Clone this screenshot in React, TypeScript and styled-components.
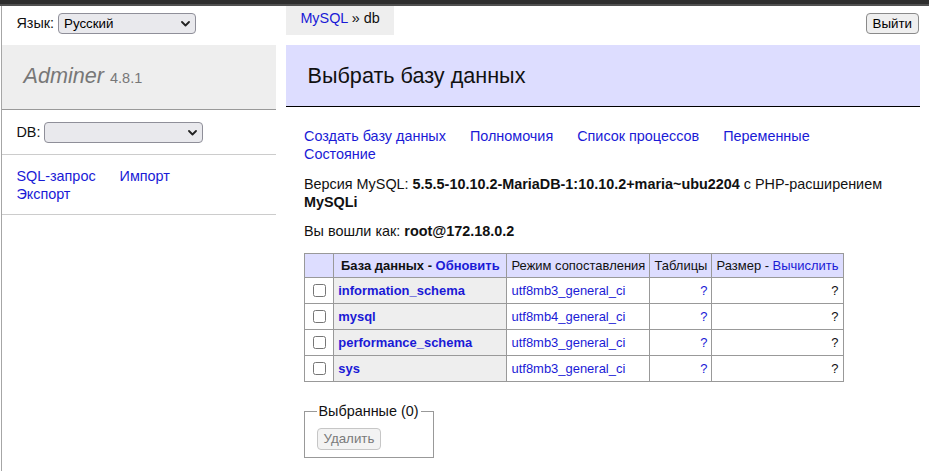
import React from "react";
import styled, { createGlobalStyle } from "styled-components";

const Global = createGlobalStyle`
  html, body { margin: 0; padding: 0; background: #fff; }
  body {
    font: 14.4px/1.25 "Liberation Sans", Arial, sans-serif;
    color: #111;
  }
  #root { width: 929px; overflow: hidden; }
`;

const TopBar = styled.div`
  height: 6px;
  background: linear-gradient(#2e2e2e 0 4px, #505050 4px 6px);
`;

const Frame = styled.div`
  margin-left: 1px;
  border-left: 1px solid #a6a6a6;
  width: 918px;
  min-height: 465px;
  display: grid;
  grid-template-columns: 273.6px 1fr;
  column-gap: 10.4px;
  align-items: start;
`;

const Sidebar = styled.aside`
  display: flex;
  flex-direction: column;
`;

const LangBar = styled.div`
  height: 25.92px;
  padding: 4.32px 14.4px 8.56px;
  display: flex;
  align-items: center;
  gap: 4px;
`;

const SelectWrap = styled.span<{ $w: number }>`
  position: relative;
  display: inline-block;
  width: ${(p) => p.$w}px;
  height: 21px;
`;

const NativeSelect = styled.select`
  appearance: none;
  -webkit-appearance: none;
  width: 100%;
  height: 100%;
  box-sizing: border-box;
  border: 1px solid #8f8f99;
  border-radius: 4px;
  background: #e9e9ed;
  color: #000;
  font: 13.33px "Liberation Sans", Arial, sans-serif;
  padding: 0 22px 0 5px;
  margin: 0;
`;

const Chevron = styled.svg`
  position: absolute;
  right: 6px;
  top: 8px;
  pointer-events: none;
`;

const Logo = styled.h1`
  margin: 0;
  font-size: 21.6px;
  line-height: 27px;
  padding: 17.28px 21.6px;
  font-weight: normal;
  background: #eee;
  border-bottom: 1px solid #999;
  color: #777;
`;

const LogoLink = styled.a`
  color: #777;
  font-style: italic;
  text-decoration: none;
`;

const Version = styled.span`
  font-size: 14.47px;
  color: #777;
`;

const DbForm = styled.form`
  margin: 0;
  padding: 11.52px 14.4px;
  border-bottom: 1px solid #ccc;
  display: flex;
  align-items: center;
  gap: 4px;
`;

const SideLinks = styled.p`
  margin: 0;
  padding: 11.52px 14.4px;
  border-bottom: 1px solid #ccc;
  line-height: 18px;
`;

const Link = styled.a<{ $bold?: boolean }>`
  color: #1a1ad6;
  text-decoration: none;
  font-weight: ${(p) => (p.$bold ? "bold" : "normal")};
`;

const NavLink = styled(Link)`
  white-space: nowrap;
  margin-right: 20px;
`;

const Main = styled.main`
  display: block;
  min-width: 0;
`;

const TopRow = styled.div`
  height: 38.8px;
  display: flex;
  justify-content: space-between;
  align-items: flex-start;
`;

const Breadcrumb = styled.div`
  height: 28.8px;
  line-height: 25.92px;
  padding: 0 14.4px;
  background: #eee;
  white-space: nowrap;
`;

const LogoutButton = styled.button`
  margin: 7.2px 1px 0 0;
  height: 21px;
  padding: 1px 6px;
  font: 13.33px "Liberation Sans", Arial, sans-serif;
  color: #000;
  background: #efefef;
  border: 1px solid #8a8a8a;
  border-radius: 4px;
`;

const Title = styled.h2`
  margin: 0 0 20px;
  font-size: 21.6px;
  line-height: 27px;
  padding: 17.28px 21.6px;
  font-weight: normal;
  color: #111;
  background: #ddf;
  border-bottom: 1px solid #000;
`;

const Content = styled.div`
  padding-left: 18px;
`;

const Para = styled.p`
  margin: 11.52px 20px 0 0;
  line-height: 18px;
`;

const DbTable = styled.table`
  margin: 12.96px 20px 0 0;
  border-collapse: collapse;
  font-size: 12.96px;
  line-height: 16.2px;
`;

const HeadRow = styled.tr`
  height: 24px;
`;

const BodyRow = styled.tr`
  height: 26px;
`;

const HeadTh = styled.th`
  background: #ddf;
  border: 1px solid #999;
  padding: 2.6px 6.8px;
  text-align: center;
  font-weight: bold;
`;

const HeadTd = styled.td`
  background: #ddf;
  border: 1px solid #999;
  padding: 2.6px 4.1px;
  text-align: left;
`;

const Cell = styled.td<{ $right?: boolean }>`
  border: 1px solid #999;
  padding: 2.6px 4.1px;
  text-align: ${(p) => (p.$right ? "right" : "left")};
`;

const NameTh = styled.th`
  border: 1px solid #999;
  padding: 2.6px 4.1px;
  background: #eee;
  text-align: left;
`;

const Check = styled.input`
  margin: 3px 3px 3px 4px;
  vertical-align: middle;
`;

const Footer = styled.div`
  border-top: 20px solid #fff;
  padding-bottom: 7.2px;
`;

const Fieldset = styled.fieldset`
  display: inline-block;
  vertical-align: top;
  margin: 0 7.2px 0 0;
  padding: 7.2px 12.5px 7.2px 11.52px;
  border: 1px solid #999;
`;

const Legend = styled.legend`
  padding: 0 2px;
  line-height: 18px;
`;

const DelButton = styled.button`
  height: 22px;
  padding: 1px 6px;
  font: 13.33px "Liberation Sans", Arial, sans-serif;
  color: #7a7a7a;
  background: #f3f3f3;
  border: 1px solid #c6c6c6;
  border-radius: 4px;
`;

const ChevronIcon = () => (
  <Chevron width="9" height="6" viewBox="0 0 9 6">
    <polyline points="1,1 4.5,4.5 8,1" fill="none" stroke="#222" strokeWidth="1.8" strokeLinecap="round" strokeLinejoin="round" />
  </Chevron>
);

const dbs = [
  { name: "information_schema", coll: "utf8mb3_general_ci" },
  { name: "mysql", coll: "utf8mb4_general_ci" },
  { name: "performance_schema", coll: "utf8mb3_general_ci" },
  { name: "sys", coll: "utf8mb3_general_ci" },
];

export default function App() {
  return (
    <>
      <Global />
      <TopBar />
      <Frame>
        <Sidebar>
          <LangBar>
            <span>Язык:</span>
            <SelectWrap $w={138}>
              <NativeSelect defaultValue="ru">
                <option value="ru">Русский</option>
                <option value="en">English</option>
              </NativeSelect>
              <ChevronIcon />
            </SelectWrap>
          </LangBar>
          <Logo>
            <LogoLink href="#">Adminer</LogoLink> <Version>4.8.1</Version>
          </Logo>
          <DbForm>
            <span>DB:</span>
            <SelectWrap $w={159}>
              <NativeSelect defaultValue="">
                <option value=""></option>
                <option>information_schema</option>
                <option>mysql</option>
                <option>performance_schema</option>
                <option>sys</option>
              </NativeSelect>
              <ChevronIcon />
            </SelectWrap>
          </DbForm>
          <SideLinks>
            <NavLink href="#">SQL-запрос</NavLink>{" "}
            <NavLink href="#">Импорт</NavLink>{" "}
            <NavLink href="#">Экспорт</NavLink>
          </SideLinks>
        </Sidebar>
        <Main>
          <TopRow>
            <Breadcrumb>
              <Link href="#">MySQL</Link> » db
            </Breadcrumb>
            <LogoutButton>Выйти</LogoutButton>
          </TopRow>
          <Title>Выбрать базу данных</Title>
          <Content>
            <Para>
              <NavLink href="#">Создать базу данных</NavLink>{" "}
              <NavLink href="#">Полномочия</NavLink>{" "}
              <NavLink href="#">Список процессов</NavLink>{" "}
              <NavLink href="#">Переменные</NavLink>{" "}
              <NavLink href="#">Состояние</NavLink>
            </Para>
            <Para>
              Версия MySQL: <b>5.5.5-10.10.2-MariaDB-1:10.10.2+maria~ubu2204</b> с PHP-расширением <b>MySQLi</b>
            </Para>
            <Para>
              Вы вошли как: <b>root@172.18.0.2</b>
            </Para>
            <form>
              <DbTable>
                <thead>
                  <HeadRow>
                    <HeadTd></HeadTd>
                    <HeadTh>
                      База данных - <Link href="#" $bold>Обновить</Link>
                    </HeadTh>
                    <HeadTd>Режим сопоставления</HeadTd>
                    <HeadTd>Таблицы</HeadTd>
                    <HeadTd>
                      Размер - <Link href="#">Вычислить</Link>
                    </HeadTd>
                  </HeadRow>
                </thead>
                <tbody>
                  {dbs.map((d) => (
                    <BodyRow key={d.name}>
                      <Cell>
                        <Check type="checkbox" />
                      </Cell>
                      <NameTh>
                        <Link href="#" $bold>{d.name}</Link>
                      </NameTh>
                      <Cell>
                        <Link href="#">{d.coll}</Link>
                      </Cell>
                      <Cell $right>
                        <Link href="#">?</Link>
                      </Cell>
                      <Cell $right>?</Cell>
                    </BodyRow>
                  ))}
                </tbody>
              </DbTable>
              <Footer>
                <Fieldset>
                  <Legend>Выбранные (0)</Legend>
                  <DelButton type="button" disabled>Удалить</DelButton>
                </Fieldset>
              </Footer>
            </form>
          </Content>
        </Main>
      </Frame>
    </>
  );
}
